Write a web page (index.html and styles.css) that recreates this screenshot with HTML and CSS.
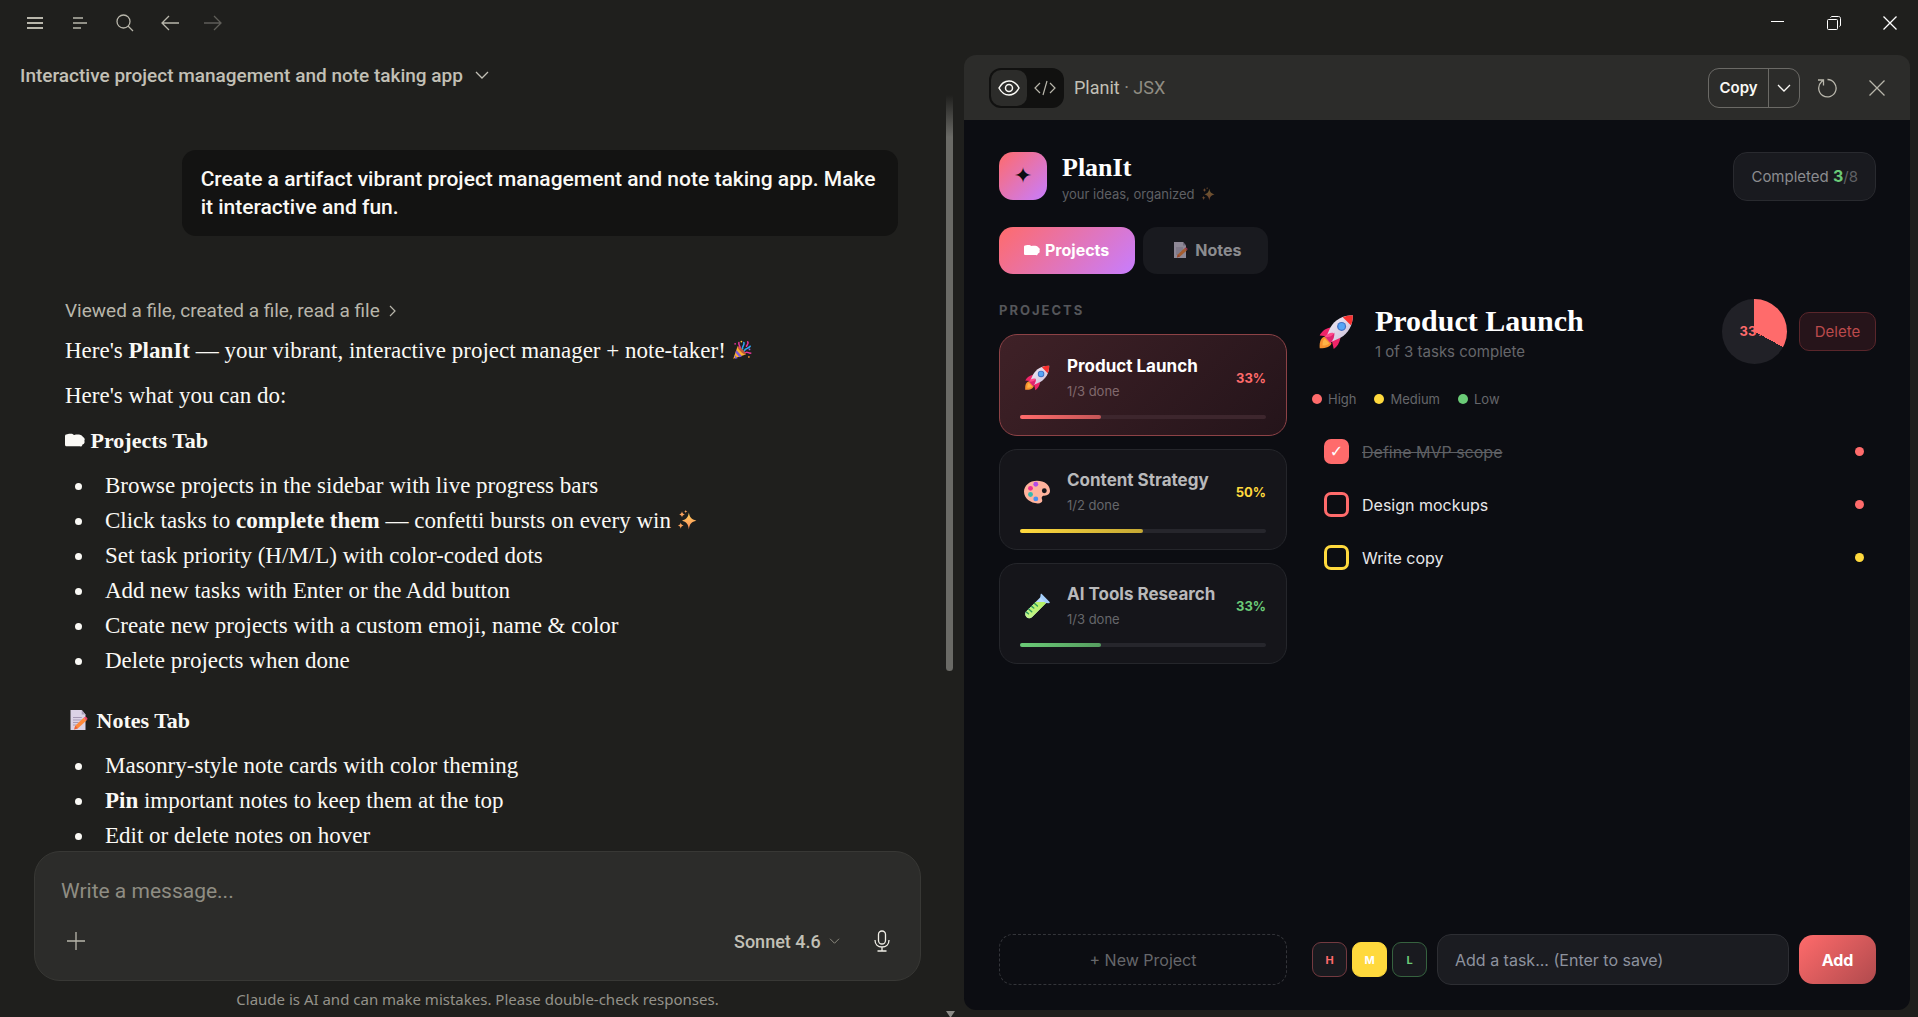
FILE: index.html
```html
<!DOCTYPE html>
<html lang="en">
<head>
    <meta charset="UTF-8">
    <title>Interactive project management and note taking app</title>
    <link rel="stylesheet" href="styles.css">
</head>
<body>
    <!-- Emoji and icon symbols -->
    <svg class="symbols" aria-hidden="true">
        <defs>
            <linearGradient id="starFill" x1="0" y1="0" x2="0" y2="1">
                <stop offset="0" stop-color="#ffd45c"/>
                <stop offset="1" stop-color="#ff8a5c"/>
            </linearGradient>
            <linearGradient id="rocketBody" x1="0" y1="0" x2="1" y2="1">
                <stop offset="0" stop-color="#f4eef8"/>
                <stop offset="1" stop-color="#c9bcd6"/>
            </linearGradient>
            <linearGradient id="tubeFill" x1="1" y1="0" x2="0" y2="1">
                <stop offset="0" stop-color="#b4f060"/>
                <stop offset="1" stop-color="#c4f58e"/>
            </linearGradient>
        </defs>
        <symbol id="rocket" viewBox="0 0 32 32">
            <path d="M6 20c-3 1-5 4-4.500 10.500C8 30.500 11 29 12 26z" fill="#f8912d"/>
            <path d="M6 22c-1.500 1-2 3-2 6 3 0 5-.5 6-2z" fill="#ffb347"/>
            <path d="M11 12c-5 1-8 4-9.500 7l8 1zM20 21c-1 5-3 8-6 10l-2-8.500z" fill="#ef2468"/>
            <path d="M31 1c-9 0-16 4-20 11L7 21l4 4 9-4c7-4 11-11 11-20z" fill="url(#rocketBody)"/>
            <path d="M31 1c-3.500 0-6.500.600-9 1.800l7.200 7.200C30.400 7.500 31 4.500 31 1z" fill="#f8312f"/>
            <path d="M6 20c2-2 5-4 8-3 1 3-1 7-3 9z" fill="#ff4b8b"/>
            <path d="M6.500 20.500c3 .5 7-1 8-4 .5 4-1.500 7-3.500 9z" fill="#e0246e"/>
            <circle cx="21" cy="11" r="4" fill="#3f6fc4"/>
            <circle cx="21" cy="11" r="2.900" fill="#55a5f5"/>
        </symbol>
        <symbol id="palette" viewBox="0 0 32 32">
            <path d="M16 2C7 2 0 8 0 15.500 0 24 8 30 17 30c3.500 0 5.500-1.500 5.500-3.500 0-1.500-.7-2-.7-3.500 0-1.700 1.500-2.500 3.200-2.500 4.500 0 7-2.500 7-6C32 7 25 2 16 2z" fill="#ffb39d"/>
            <circle cx="25" cy="14.500" r="3" fill="#17171c"/>
            <circle cx="14.500" cy="6.500" r="3" fill="#b44ce8"/>
            <circle cx="8" cy="11.500" r="3" fill="#f0308f"/>
            <circle cx="8" cy="19" r="3" fill="#35b9b0"/>
            <circle cx="14.500" cy="24.500" r="3" fill="#4a90f0"/>
        </symbol>
        <symbol id="tube" viewBox="0 0 32 32">
            <path d="M22 3.500l7 7L10 29.500c-2 2-5 2-7 0s-2-5 0-7z" fill="#b8dbff"/>
            <path d="M14.500 11H28.500L10 29.500c-2 2-5 2-7 0s-2-5 0-7z" fill="url(#tubeFill)"/>
            <path d="M20.500 1.500l-.5 4 6.800 6.800 4 .2c1 0 1.200-1 .5-1.700L22.200 1.500c-.7-.7-1.600-.7-1.700 0z" fill="#a5cffc"/>
            <path d="M13 13l3.500 3M9.500 16.500l2.500 2M6 20l3.500 3M3 23.500l2.500 2" stroke="#2f9a5e" stroke-width="1.800" stroke-linecap="round"/>
        </symbol>
        <symbol id="sparkles" viewBox="0 0 32 32">
            <path d="M19 4c1 7 4 11 12 13-8 2-11 5-12 14-1-9-4-12-11-14 7-2 10-6 11-13z" fill="url(#starFill)"/>
            <path d="M8 2c.6 3 1.500 4 4.500 5-3 .8-3.900 1.800-4.500 5-.6-3.200-1.500-4.200-4.500-5 3-1 3.900-2 4.500-5zM6 20c.6 3 1.500 4 4.500 4.800C7.500 25.600 6.600 27 6 30c-.6-3-1.500-4.400-4.500-5.200C4.500 24 5.400 23 6 20zM14 0c.3 1.500 1 2 2.500 2.500C15 3 14.300 3.500 14 5c-.3-1.500-1-2-2.500-2.500C13 2 13.700 1.500 14 0z" fill="#f9a25c"/>
        </symbol>
        <symbol id="memo" viewBox="0 0 32 32">
            <path d="M4 0h18l6 7v25H4z" fill="#dcd3e6"/>
            <path d="M22 0l6 7h-6z" fill="#a99db8"/>
            <path d="M8 12h14M8 16h14M8 20h9M8 24h6" stroke="#a699b5" stroke-width="1.600"/>
            <path d="M10 31l1.500-6L25 12.500l5 4L16 29z" fill="#ff8a3c"/>
            <path d="M25 12.500l2-1.500c1.500-1 5 2 4 3.800L30 16.500z" fill="#f4486e"/>
            <path d="M10 31l1.500-6 4.500 4z" fill="#e8603c"/>
        </symbol>
        <symbol id="party" viewBox="0 0 32 32">
            <path d="M2 30L9 10l13 13z" fill="#ffb02e"/>
            <path d="M7 16l9 10-4 1.500L5.500 20zM4 23.500l5 5.500-4 1z" fill="#7d5bd6"/>
            <path d="M9 10c3-1 14 10 13 13-3 1.500-14.500-9.500-13-13z" fill="#c05a38"/>
            <path d="M17 14c-2-4 4-5 2-10M20 17c1-5 6-2 9-7" fill="none" stroke="#30a4f0" stroke-width="2.600" stroke-linecap="round"/>
            <path d="M22 20c3-2 5 2 8 1M13 12c0-3-3-4-2-8M25 3c2 2 0 4-2 7" fill="none" stroke="#e8359c" stroke-width="2.400" stroke-linecap="round"/>
            <circle cx="28" cy="15" r="1.400" fill="#9a5be0"/>
            <circle cx="15" cy="2.500" r="1.400" fill="#ffc93c"/>
            <circle cx="5" cy="6" r="1.400" fill="#e8359c"/>
            <circle cx="27" cy="27" r="1.400" fill="#f8912d"/>
        </symbol>
        <symbol id="folder" viewBox="0 0 32 24">
            <path d="M2 3c3-1 6-1 9-1 2 0 2 2 4 2 3-1 7-1 10 0 2 0 2 2 4 3 3 2 3 4 2 6 1 3 0 5-3 6-1 3-2 4-4 3H3c-2 0-3-1-3-3V6c0-2 1-3 2-3z" fill="currentColor"/>
        </symbol>
        <symbol id="chevron" viewBox="0 0 14 8">
            <path d="M1 1l6 6 6-6" fill="none" stroke="currentColor" stroke-width="1.300"/>
        </symbol>
    </svg>

    <div class="titlebar">
        <button class="icon-btn" aria-label="Menu">
            <svg width="16" height="14" viewBox="0 0 16 14" stroke="currentColor" stroke-width="2"><path d="M0 2h16M0 7h16M0 12h16"/></svg>
        </button>
        <button class="icon-btn" aria-label="Sidebar">
            <svg width="14" height="14" viewBox="0 0 14 14" stroke="currentColor" stroke-width="1.500"><path d="M0 2h10M0 7h14M0 12h8"/></svg>
        </button>
        <button class="icon-btn" aria-label="Search">
            <svg width="18" height="18" viewBox="0 0 18 18" fill="none" stroke="currentColor" stroke-width="1.300"><circle cx="7.500" cy="7.500" r="6.500"/><path d="M12 12l5 5"/></svg>
        </button>
        <button class="icon-btn" aria-label="Back">
            <svg width="18" height="16" viewBox="0 0 18 16" fill="none" stroke="currentColor" stroke-width="1.300"><path d="M8 1L1 8l7 7M1 8h17"/></svg>
        </button>
        <button class="icon-btn disabled" aria-label="Forward">
            <svg width="18" height="16" viewBox="0 0 18 16" fill="none" stroke="currentColor" stroke-width="1.300"><path d="M10 1l7 7-7 7M0 8h17"/></svg>
        </button>
        <div class="window-controls">
            <button aria-label="Minimize">
                <svg width="14" height="14" viewBox="0 0 14 14" stroke="currentColor"><path d="M0 5.500h13"/></svg>
            </button>
            <button aria-label="Restore">
                <svg width="14" height="14" viewBox="0 0 14 14" fill="none" stroke="currentColor"><rect x=".5" y="3.500" width="10" height="10" rx="1"/><path d="M3.500 1.500C4 .8 4.500.5 5 .5h6.500c1.200 0 2 .8 2 2V9c0 .8-.5 1.300-1 1.500"/></svg>
            </button>
            <button aria-label="Close window">
                <svg width="14" height="14" viewBox="0 0 14 14" stroke="currentColor" stroke-width="1.300"><path d="M.5.5l13 13M13.500.5l-13 13"/></svg>
            </button>
        </div>
    </div>

    <div class="workspace">
        <!-- Conversation -->
        <div class="chat">
            <div class="chat-header">
                <button class="chat-title">Interactive project management and note taking app
                    <svg width="14" height="8"><use href="#chevron"/></svg>
                </button>
            </div>
            <div class="chat-body">
                <div class="chat-column">
                    <div class="messages">
                        <div class="user-message">Create a artifact vibrant project management and note taking app. Make it interactive and fun.</div>
                        <div class="reply">
                            <button class="steps">Viewed a file, created a file, read a file
                                <svg width="8" height="14" viewBox="0 0 8 14" fill="none" stroke="currentColor" stroke-width="1.200"><path d="M1 2l5 5-5 5"/></svg>
                            </button>
                            <p>Here's <strong>PlanIt</strong> — your vibrant, interactive project manager + note-taker! <svg class="emoji"><use href="#party"/></svg></p>
                            <p>Here's what you can do:</p>
                            <h3><svg class="emoji"><use href="#folder"/></svg> Projects Tab</h3>
                            <ul>
                                <li>Browse projects in the sidebar with live progress bars</li>
                                <li>Click tasks to <strong>complete them</strong> — confetti bursts on every win <svg class="emoji"><use href="#sparkles"/></svg></li>
                                <li>Set task priority (H/M/L) with color-coded dots</li>
                                <li>Add new tasks with Enter or the Add button</li>
                                <li>Create new projects with a custom emoji, name &amp; color</li>
                                <li>Delete projects when done</li>
                            </ul>
                            <h3><svg class="emoji wide"><use href="#memo"/></svg> Notes Tab</h3>
                            <ul>
                                <li>Masonry-style note cards with color theming</li>
                                <li><strong>Pin</strong> important notes to keep them at the top</li>
                                <li>Edit or delete notes on hover</li>
                            </ul>
                        </div>
                    </div>
                    <div class="composer">
                        <input type="text" placeholder="Write a message..." aria-label="Write a message">
                        <div class="composer-tools">
                            <button aria-label="Attach">
                                <svg width="18" height="18" viewBox="0 0 18 18" stroke="currentColor" stroke-width="1.300"><path d="M9 0v18M0 9h18"/></svg>
                            </button>
                            <label class="model">
                                <select aria-label="Model"><option>Sonnet 4.6</option></select>
                                <svg width="11" height="6"><use href="#chevron"/></svg>
                            </label>
                            <button class="mic" aria-label="Voice input">
                                <svg width="16" height="22" viewBox="0 0 16 22" fill="none" stroke="currentColor" stroke-width="1.300"><rect x="4.500" y="1" width="7" height="13" rx="3.500"/><path d="M1 10c0 4.500 3 7 7 7s7-2.500 7-7M8 17v4M3.500 21h9"/></svg>
                            </button>
                        </div>
                    </div>
                    <div class="disclaimer">Claude is AI and can make mistakes. Please double-check responses.</div>
                </div>
                <div class="scroll-rail">
                    <div class="scroll-thumb"></div>
                    <div class="scroll-arrow"></div>
                </div>
            </div>
        </div>

        <!-- Artifact preview -->
        <div class="artifact">
            <div class="artifact-header">
                <div class="view-toggle">
                    <button class="active" aria-label="Preview">
                        <svg width="22" height="16" viewBox="0 0 22 16" fill="none" stroke="currentColor" stroke-width="1.500"><path d="M1 8c2.500-4.700 6-7 10-7s7.500 2.300 10 7c-2.500 4.700-6 7-10 7S3.500 12.700 1 8z"/><circle cx="11" cy="8" r="3.500"/></svg>
                    </button>
                    <button aria-label="Code">
                        <svg width="22" height="16" viewBox="0 0 22 16" fill="none" stroke="currentColor" stroke-width="1.200"><path d="M6 3L1 8l5 5M16 3l5 5-5 5M13 1L9 15"/></svg>
                    </button>
                </div>
                <div class="artifact-title">Planit <span>· JSX</span></div>
                <div class="copy-group">
                    <button>Copy</button>
                    <button aria-label="Copy options"><svg width="14" height="8"><use href="#chevron"/></svg></button>
                </div>
                <button class="icon-btn" aria-label="Reload">
                    <svg width="20" height="20" viewBox="0 0 20 20" fill="none" stroke="currentColor" stroke-width="1.300"><path d="M10.500 1.500a8.700 8.700 0 1 1-6 2.300L6.500 2M1 2h5.500v5.500"/></svg>
                </button>
                <button class="icon-btn" aria-label="Close">
                    <svg width="16" height="16" viewBox="0 0 16 16" stroke="currentColor" stroke-width="1.300"><path d="M.5.5l15 15M15.500.5l-15 15"/></svg>
                </button>
            </div>

            <div class="app">
                <div class="app-header">
                    <div class="logo">✦</div>
                    <div class="brand">
                        <h1>PlanIt</h1>
                        <div class="tagline">your ideas, organized <svg class="emoji-dim"><use href="#sparkles"/></svg></div>
                    </div>
                    <div class="completed">Completed <strong>3</strong><span>/8</span></div>
                </div>
                <div class="tabs">
                    <button class="tab active"><svg width="16" height="12"><use href="#folder"/></svg> Projects</button>
                    <button class="tab"><svg class="memo-icon" width="16" height="16"><use href="#memo"/></svg> Notes</button>
                </div>

                <div class="board">
                    <div class="sidebar">
                        <h4>PROJECTS</h4>
                        <div class="project active red">
                            <div class="project-info">
                                <svg class="project-emoji"><use href="#rocket"/></svg>
                                <div class="project-text">
                                    <div class="project-name">Product Launch</div>
                                    <div class="project-done">1/3 done</div>
                                </div>
                                <div class="percent">33%</div>
                            </div>
                            <div class="bar"><div class="fill" style="width: 33%"></div></div>
                        </div>
                        <div class="project yellow">
                            <div class="project-info">
                                <svg class="project-emoji"><use href="#palette"/></svg>
                                <div class="project-text">
                                    <div class="project-name">Content Strategy</div>
                                    <div class="project-done">1/2 done</div>
                                </div>
                                <div class="percent">50%</div>
                            </div>
                            <div class="bar"><div class="fill" style="width: 50%"></div></div>
                        </div>
                        <div class="project green">
                            <div class="project-info">
                                <svg class="project-emoji"><use href="#tube"/></svg>
                                <div class="project-text">
                                    <div class="project-name">AI Tools Research</div>
                                    <div class="project-done">1/3 done</div>
                                </div>
                                <div class="percent">33%</div>
                            </div>
                            <div class="bar"><div class="fill" style="width: 33%"></div></div>
                        </div>
                        <button class="new-project">+ New Project</button>
                    </div>

                    <div class="detail">
                        <div class="detail-header">
                            <svg class="detail-emoji"><use href="#rocket"/></svg>
                            <div class="detail-text">
                                <h2>Product Launch</h2>
                                <div class="detail-sub">1 of 3 tasks complete</div>
                            </div>
                            <div class="pie">33%</div>
                            <button class="delete">Delete</button>
                        </div>
                        <div class="legend">
                            <div class="red"><i class="dot"></i>High</div>
                            <div class="yellow"><i class="dot"></i>Medium</div>
                            <div class="green"><i class="dot"></i>Low</div>
                        </div>
                        <div class="tasks">
                            <label class="task red"><input type="checkbox" checked><span>Define MVP scope</span><i class="dot"></i></label>
                            <label class="task red"><input type="checkbox"><span>Design mockups</span><i class="dot"></i></label>
                            <label class="task yellow"><input type="checkbox"><span>Write copy</span><i class="dot"></i></label>
                        </div>
                        <div class="add-row">
                            <div class="priority">
                                <button class="red">H</button>
                                <button class="yellow active">M</button>
                                <button class="green">L</button>
                            </div>
                            <input type="text" placeholder="Add a task... (Enter to save)" aria-label="Add a task">
                            <button class="add">Add</button>
                        </div>
                    </div>
                </div>
            </div>
        </div>
    </div>
</body>
</html>
```
FILE: styles.css
```css
* {
    box-sizing: border-box;
}
body {
    margin: 0;
    height: 100vh;
    display: flex;
    flex-direction: column;
    background: #1f1f1d;
    color: #faf9f5;
    font-family: Roboto, "Noto Sans", sans-serif;
    overflow: hidden;
}
button, input, select {
    font-family: inherit;
    color: inherit;
    background: none;
    border: none;
    padding: 0;
    margin: 0;
}
button {
    cursor: pointer;
}
svg {
    display: block;
}
.symbols {
    position: absolute;
    width: 0;
    height: 0;
}
.red { --c: #ff6b6b; --edge: #733a40; }
.yellow { --c: #ffd93d; --edge: #ffd93d; }
.green { --c: #6bcb77; --edge: #36623f; }

/* Title bar */
.titlebar {
    height: 55px;
    flex: none;
    display: flex;
    align-items: flex-start;
    padding: 0 0 0 12px;
    color: #b8b6ab;
}
.icon-btn {
    width: 50px;
    height: 46px;
    display: flex;
    align-items: center;
    justify-content: center;
}
.titlebar .icon-btn {
    width: 45px;
}
.titlebar .disabled {
    width: 41px;
    color: #5f5e59;
}
.window-controls {
    margin-left: auto;
    display: flex;
    color: #fff;
}
.window-controls button {
    width: 56px;
    height: 46px;
    display: flex;
    align-items: center;
    justify-content: center;
}

.workspace {
    flex: 1;
    min-height: 0;
    display: flex;
}

/* Chat */
.chat {
    flex: 1;
    min-width: 0;
    display: flex;
    flex-direction: column;
}
.chat-header {
    height: 40px;
    flex: none;
    padding-left: 20px;
    display: flex;
    align-items: center;
}
.chat-title {
    display: flex;
    align-items: center;
    gap: 12px;
    font-size: 19px;
    font-weight: 500;
    color: #c2c0b6;
}
.chat-body {
    flex: 1;
    min-height: 0;
    display: flex;
}
.chat-column {
    flex: 1;
    min-width: 0;
    display: flex;
    flex-direction: column;
    padding: 0 25px 0 34px;
}
.messages {
    flex: 1;
    min-height: 0;
    overflow: hidden;
    padding: 55px 23px 0 31px;
    display: flex;
    flex-direction: column;
}
.user-message {
    align-self: flex-end;
    max-width: 86%;
    padding: 15px 19px;
    border-radius: 14px;
    background: #131312;
    font-size: 21px;
    font-weight: 500;
    line-height: 28px;
}
.reply {
    margin-top: 59px;
    font-family: "Liberation Serif", serif;
    font-size: 23px;
    line-height: 31px;
}
.steps {
    display: flex;
    align-items: center;
    gap: 9px;
    margin-bottom: 9px;
    font-family: Roboto, "Noto Sans", sans-serif;
    font-size: 19px;
    line-height: 31px;
    color: #b8b6ab;
}
.reply p {
    margin: 0 0 14px;
}
.reply h3 {
    margin: 0 0 14px;
    font-size: 22px;
    line-height: 31px;
}
.reply ul {
    margin: 0 0 29px;
    padding-left: 30px;
}
.reply li {
    padding-left: 10px;
    margin-bottom: 4px;
}
.emoji {
    display: inline-block;
    width: 20px;
    height: 20px;
    vertical-align: -2px;
}
.emoji.wide {
    width: 26px;
}

.composer {
    flex: none;
    padding: 19px 26px;
    border: 1px solid #383835;
    border-radius: 26px;
    background: #2c2c2a;
    display: flex;
    flex-direction: column;
    gap: 10px;
}
.composer input {
    height: 40px;
    font-size: 21px;
    outline: none;
}
.composer input::placeholder {
    color: #8f8d83;
    opacity: 1;
}
.composer-tools {
    height: 40px;
    display: flex;
    align-items: center;
    padding: 0 4px 0 6px;
    color: #b8b6ab;
}
.model {
    margin-left: auto;
    display: flex;
    align-items: center;
    gap: 8px;
    color: #8f8d83;
}
.model select {
    appearance: none;
    font-size: 18px;
    font-weight: 500;
    color: #c2c0b6;
}
.mic {
    margin-left: 34px;
    color: #f0eee6;
}
.disclaimer {
    flex: none;
    height: 36px;
    line-height: 36px;
    text-align: center;
    font-family: "Noto Sans", sans-serif;
    font-size: 15px;
    color: #94928a;
}
.scroll-rail {
    width: 18px;
    display: flex;
    flex-direction: column;
    justify-content: space-between;
}
.scroll-thumb {
    width: 7px;
    height: 62.5%;
    border-radius: 0 0 4px 4px;
    background: linear-gradient(#1f1f1d, #6a6a66 42px);
}
.scroll-arrow {
    width: 9px;
    border: 4px solid transparent;
    border-top: 6px solid #8c8b87;
    border-bottom: none;
}

/* Artifact panel */
.artifact {
    width: calc(50vw - 13px);
    margin: 0 8px 7px 0;
    border-radius: 12px;
    overflow: hidden;
    display: flex;
    flex-direction: column;
}
.artifact-header {
    height: 65px;
    flex: none;
    display: flex;
    align-items: center;
    padding: 0 8px 0 25px;
    background: #2c2c2a;
    color: #b8b6ab;
}
.view-toggle {
    height: 40px;
    padding: 2px;
    display: flex;
    border-radius: 12px;
    background: #111110;
}
.view-toggle button {
    width: 35px;
    display: flex;
    align-items: center;
    justify-content: center;
}
.view-toggle .active {
    width: 36px;
    border-radius: 10px;
    background: #2c2c2a;
    color: #faf9f5;
}
.artifact-title {
    margin-left: 10px;
    font-size: 18px;
    color: #c2c0b6;
}
.artifact-title span {
    color: #8f8d83;
}
.copy-group {
    margin: 0 2px 0 auto;
    height: 40px;
    display: flex;
    border: 1px solid #6b6a66;
    border-radius: 11px;
    color: #faf9f5;
}
.copy-group button {
    width: 59px;
    font-family: "Inter", sans-serif;
    font-size: 15px;
    font-weight: 600;
}
.copy-group button + button {
    width: 31px;
    border-left: 1px solid #6b6a66;
    display: flex;
    align-items: center;
    justify-content: center;
}

/* PlanIt app */
.app {
    flex: 1;
    min-height: 0;
    display: flex;
    flex-direction: column;
    padding: 32px 34px 25px 35px;
    background: #0c0d12;
    font-family: "Inter", sans-serif;
}
.app h1, .app h2 {
    margin: 0;
    font-family: "Liberation Serif", serif;
    color: #fff;
}
.app-header {
    height: 48px;
    display: flex;
    align-items: flex-start;
}
.logo {
    width: 48px;
    height: 48px;
    border-radius: 14px;
    background: linear-gradient(135deg, #ff6b6b, #c77dff);
    color: #0c0d12;
    font-family: "DejaVu Sans", sans-serif;
    font-size: 22px;
    line-height: 48px;
    text-align: center;
}
.brand {
    margin-left: 15px;
}
.app h1 {
    font-size: 26px;
    line-height: 32px;
}
.tagline {
    display: flex;
    align-items: center;
    gap: 6px;
    font-size: 13px;
    line-height: 20px;
    color: #5f6064;
}
.emoji-dim {
    width: 14px;
    height: 14px;
    opacity: 0.4;
}
.completed {
    margin-left: auto;
    padding: 0 17px;
    border: 1px solid #292a2f;
    border-radius: 14px;
    background: #191a1f;
    color: #8b8c8f;
    font-size: 15px;
    line-height: 46px;
}
.completed strong {
    font-size: 16px;
    color: #6bcb77;
}
.completed span {
    color: #5f6064;
}
.tabs {
    display: flex;
    gap: 8px;
    margin-top: 27px;
}
.tab {
    height: 47px;
    padding: 0 26px 2px 25px;
    display: flex;
    align-items: center;
    gap: 5px;
    border-radius: 14px;
    background: #191a1f;
    color: #8b8c8f;
    font-size: 16px;
    font-weight: 700;
}
.tab.active {
    background: linear-gradient(135deg, #ff6b6b, #c77dff);
    color: #fff;
}
.memo-icon {
    margin: 0 2px 0 4px;
    opacity: 0.6;
}

.board {
    flex: 1;
    min-height: 0;
    margin-top: 25px;
    display: flex;
    gap: 25px;
}
.sidebar {
    width: 288px;
    display: flex;
    flex-direction: column;
    gap: 13px;
}
.sidebar h4 {
    margin: 0;
    font-size: 13px;
    line-height: 22px;
    letter-spacing: 2px;
    color: #55565a;
}
.project {
    padding: 18px 20px 16px;
    border: 1px solid #25262b;
    border-radius: 18px;
    background: #15151a;
}
.project + .project {
    padding-top: 17px;
}
.project.active {
    border-color: #8d4246;
    background: linear-gradient(135deg, #3f2127, #24141a);
}
.project-info {
    display: flex;
    align-items: center;
}
.project-emoji {
    width: 26px;
    height: 26px;
    margin-left: 4px;
}
.project-text {
    flex: 1;
    margin-left: 17px;
}
.project-name {
    font-size: 17px;
    font-weight: 700;
    line-height: 26px;
    color: #b9b9bb;
}
.active .project-name {
    color: #fff;
}
.project-done {
    font-size: 13px;
    line-height: 24px;
    color: #66676b;
}
.active .project-done {
    color: #81696d;
}
.percent {
    font-size: 13px;
    font-weight: 700;
    color: var(--c);
}
.bar {
    height: 4px;
    margin-top: 12px;
    border-radius: 2px;
    background: #26262c;
}
.active .bar {
    background: #3d262d;
}
.fill {
    height: 4px;
    border-radius: 2px;
    background: linear-gradient(90deg, var(--c), color-mix(in srgb, var(--c) 75%, #15151a));
}
.new-project {
    height: 51px;
    margin-top: auto;
    border: 1px dashed #34353a;
    border-radius: 14px;
    font-size: 16px;
    color: #66676b;
}

.detail {
    flex: 1;
    min-width: 0;
    display: flex;
    flex-direction: column;
}
.detail-header {
    display: flex;
    align-items: center;
}
.detail-emoji {
    width: 36px;
    height: 36px;
    margin: 0 21px 0 6px;
}
.detail-text {
    flex: 1;
    padding-top: 2px;
}
.app h2 {
    font-size: 30px;
    line-height: 38px;
}
.detail-sub {
    font-size: 15px;
    line-height: 24px;
    color: #66676b;
}
.pie {
    width: 65px;
    height: 65px;
    border-radius: 50%;
    background: conic-gradient(#ff6b6b 33%, #212127 0);
    color: #ff6b6b;
    font-size: 13px;
    font-weight: 700;
    line-height: 65px;
    text-align: center;
}
.delete {
    width: 77px;
    height: 39px;
    margin-left: 12px;
    border: 1px solid #5a262b;
    border-radius: 10px;
    background: #26141a;
    color: #bb4a4c;
    font-size: 15px;
}
.legend {
    display: flex;
    gap: 18px;
    margin: 24px 0 15px;
    font-size: 13px;
    line-height: 22px;
    color: #66676b;
}
.legend div {
    display: flex;
    align-items: center;
    gap: 6px;
}
.dot {
    width: 10px;
    height: 10px;
    border-radius: 50%;
    background: var(--c);
}
.task {
    height: 53px;
    padding: 0 12px;
    display: flex;
    align-items: center;
    gap: 13px;
    font-size: 16px;
    color: #e8e8ea;
}
.task span {
    flex: 1;
}
.task .dot {
    width: 9px;
    height: 9px;
}
.task input {
    appearance: none;
    width: 25px;
    height: 25px;
    border: 3px solid var(--c);
    border-radius: 7px;
}
.task input:checked {
    background: var(--c);
}
.task input:checked::after {
    content: "✓";
    display: block;
    color: #fff;
    font-family: "DejaVu Sans", sans-serif;
    font-size: 16px;
    font-weight: 700;
    line-height: 19px;
    text-align: center;
}
.task input:checked + span {
    color: #5f6064;
    text-decoration: line-through;
}
.add-row {
    margin-top: auto;
    display: flex;
    align-items: center;
    gap: 10px;
}
.priority {
    display: flex;
    gap: 5px;
}
.priority button {
    width: 35px;
    height: 35px;
    border: 1px solid var(--edge);
    border-radius: 9px;
    background: #191a1f;
    color: var(--c);
    font-size: 11px;
    font-weight: 700;
}
.priority .active {
    background: var(--c);
    color: #fff;
}
.add-row input {
    flex: 1;
    min-width: 0;
    height: 51px;
    padding: 0 17px;
    border: 1px solid #2d2e33;
    border-radius: 14px;
    background: #1b1c21;
    font-size: 16px;
}
.add-row input::placeholder {
    color: #8d929e;
    opacity: 1;
}
.add {
    width: 77px;
    height: 49px;
    border-radius: 14px;
    background: linear-gradient(135deg, #ff6b6b, #b04a4d);
    color: #fff;
    font-size: 16px;
    font-weight: 700;
}
```
